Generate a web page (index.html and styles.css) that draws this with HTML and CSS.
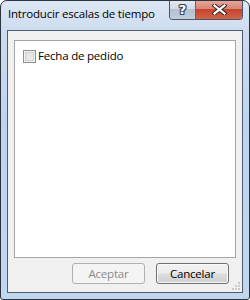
FILE: index.html
```html
<!DOCTYPE html>
<html lang="es">
<head>
<meta charset="utf-8">
<title>Introducir escalas de tiempo</title>
<link rel="stylesheet" href="styles.css">
</head>
<body>
<div class="window">
  <div class="titlebar">
    <div class="title">Introducir escalas de tiempo</div>
    <div class="caption-buttons">
      <div class="cbtn help"><span class="glyph">?</span></div>
      <div class="cbtn close">
        <svg width="15" height="11" viewBox="0 0 15 11">
          <path d="M2.5 1.5 L12.5 9.5 M12.5 1.5 L2.5 9.5" stroke="#3b2a28" stroke-width="4.2" stroke-linecap="square" fill="none"/>
          <path d="M2.5 1.5 L12.5 9.5 M12.5 1.5 L2.5 9.5" stroke="#ffffff" stroke-width="2.2" stroke-linecap="square" fill="none"/>
        </svg>
      </div>
    </div>
  </div>
  <div class="client">
    <div class="listbox">
      <label class="item"><span class="check"></span><span class="label">Fecha de pedido</span></label>
    </div>
    <div class="buttons">
      <button class="btn disabled" disabled>Aceptar</button>
      <button class="btn">Cancelar</button>
    </div>
    <svg class="grip" width="9" height="9" viewBox="0 0 9 9">
      <rect x="6" y="0" width="2" height="2" fill="#c9c9c9"/>
      <rect x="3" y="3" width="2" height="2" fill="#c9c9c9"/>
      <rect x="6" y="3" width="2" height="2" fill="#c9c9c9"/>
      <rect x="0" y="6" width="2" height="2" fill="#c9c9c9"/>
      <rect x="3" y="6" width="2" height="2" fill="#c9c9c9"/>
      <rect x="6" y="6" width="2" height="2" fill="#c9c9c9"/>
    </svg>
  </div>
</div>
</body>
</html>
```
FILE: styles.css
```css
* { box-sizing: border-box; }
html, body { margin: 0; padding: 0; background: #ffffff; }
body { width: 250px; height: 300px; font-family: "Open Sans", "Noto Sans", "DejaVu Sans", sans-serif; font-size: 11.5px; letter-spacing: -0.2px; color: #000; }

.window {
  width: 250px;
  height: 300px;
  border: 1px solid #2b3340;
  border-radius: 7px 7px 3px 3px;
  background: linear-gradient(#dce7f4 0px, #cddcef 30px, #bfd4ec 120px, #c2d6ed 300px);
  display: flex;
  flex-direction: column;
  overflow: hidden;
}

.titlebar {
  height: 29px;
  display: flex;
  align-items: flex-start;
  padding-left: 7px;
  padding-right: 6px;
}
.title {
  flex: 1;
  padding-top: 5px;
  font-size: 11.5px;
  line-height: 16px;
  color: #000;
  white-space: nowrap;
}
.caption-buttons {
  display: flex;
  height: 20px;
  margin-top: -1px;
  border: 1px solid #4a5666;
  border-top: none;
  border-radius: 0 0 4px 4px;
  overflow: hidden;
}
.cbtn {
  height: 19px;
  display: flex;
  align-items: center;
  justify-content: center;
}
.help {
  width: 26px;
  background: linear-gradient(#e3e9f0 0%, #d3dbe5 45%, #b4c1d0 50%, #c2cdd9 100%);
  border-right: 1px solid #5c6675;
}
.help .glyph {
  font-family: "DejaVu Sans", sans-serif;
  font-weight: bold;
  font-size: 13px;
  letter-spacing: 0;
  color: #ffffff;
  line-height: 13px;
  text-shadow: 1px 0 0 #3d4654, -1px 0 0 #3d4654, 0 1px 0 #3d4654, 0 -1px 0 #3d4654, 1px 1px 0 #3d4654, -1px -1px 0 #3d4654, 1px -1px 0 #3d4654, -1px 1px 0 #3d4654;
}
.close {
  width: 46px;
  background: linear-gradient(#e9a99b 0%, #d98674 45%, #c5452e 50%, #d5624c 100%);
}

.client {
  flex: 1;
  margin: 0 6px 6px 6px;
  border: 1px solid #4d5d71;
  background: #f0f0f0;
  padding: 9px 6px 8px 6px;
  display: flex;
  flex-direction: column;
  position: relative;
}

.listbox {
  height: 218px;
  border: 1px solid #a5a5a5;
  background: #ffffff;
  padding: 9px 0 0 8px;
}
.item {
  display: flex;
  align-items: center;
  height: 13px;
}
.check {
  width: 13px;
  height: 13px;
  border: 1px solid #8f8f8f;
  background: linear-gradient(135deg, #dcdcdc 0%, #f2f2f2 100%);
  box-shadow: inset 0 0 0 1px #f4f4f4, inset 0 0 0 2px #cfcfcf;
}
.label {
  margin-left: 2px;
  font-size: 11.5px;
  line-height: 13px;
  white-space: nowrap;
  position: relative;
  top: -1px;
}

.buttons {
  margin-top: 5px;
  height: 21px;
  display: flex;
  justify-content: flex-end;
  gap: 11px;
  padding-right: 7px;
}
.btn {
  width: 73px;
  height: 21px;
  font-family: "Open Sans", "Noto Sans", "DejaVu Sans", sans-serif;
  font-size: 11.5px;
  letter-spacing: -0.2px;
  line-height: 17px;
  padding: 0;
  border: 1px solid #707070;
  border-radius: 3px;
  color: #000;
  background: linear-gradient(#f2f2f2 0%, #ebebeb 48%, #dddddd 52%, #cfcfcf 100%);
  box-shadow: inset 0 0 0 1px #fbfbfb;
}
.btn.disabled {
  border-color: #adb2b5;
  background: #f4f4f4;
  color: #8b8b8b;
  box-shadow: none;
}

.grip {
  position: absolute;
  right: 1px;
  bottom: 1px;
}
```
